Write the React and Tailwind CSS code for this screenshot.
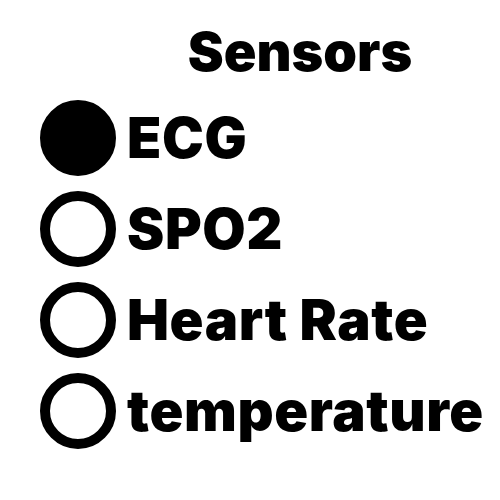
import React, {useState} from "react";

const sensors = ["ECG", "SPO2", "Heart Rate", "temperature"];

const App = () => {
    const [selected, setSelected] = useState("ECG");

    return (
        <div
            className="w-[500px] h-[500px] bg-white text-black"
            style={{fontFamily: "Inter, 'Noto Sans', sans-serif"}}
        >
            <h1 className="pl-[100px] pt-[20px] text-center text-[54px] leading-[64px] font-black">
                Sensors
            </h1>
            <div className="flex flex-col gap-[15px] pl-[40px] pt-[16px]">
                {sensors.map((name) => (
                    <label key={name} className="flex items-center gap-[11px] cursor-pointer">
                        <input
                            type="radio"
                            name="sensor"
                            className="sr-only"
                            checked={selected === name}
                            onChange={() => setSelected(name)}
                        />
                        <span
                            className={`block w-[76px] h-[76px] rounded-full border-[10px] border-black ${
                                selected === name ? "bg-black" : "bg-white"
                            }`}
                        ></span>
                        <span className="text-[56px] leading-none font-black tracking-[0.6px]">{name}</span>
                    </label>
                ))}
            </div>
        </div>
    );
};

export default App;
